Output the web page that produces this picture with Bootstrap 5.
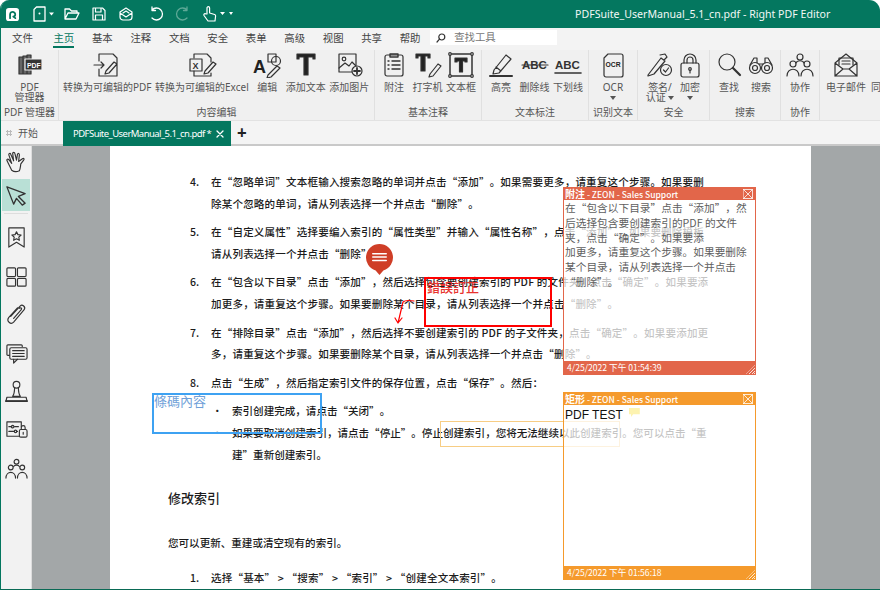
<!DOCTYPE html>
<html lang="zh"><head><meta charset="utf-8"><title>Right PDF Editor</title>
<link href="https://cdn.jsdelivr.net/npm/bootstrap@5.3.0/dist/css/bootstrap.min.css" rel="stylesheet">
<style>
html,body{margin:0;height:590px;overflow:hidden;background:#fff}
body{font-family:"Noto Sans","Noto Sans CJK SC",sans-serif;color:#333}
svg{display:block;fill:none;stroke:#333;stroke-width:1.2;stroke-linecap:round;stroke-linejoin:round}
.appwin{width:880px;height:590px;border-left:1px solid #04775f;border-bottom:1px solid #0a6a55;border-radius:9px 11px 0 0;overflow:hidden;background:#f0f0f0}
.titlebar{height:28px;background:#04775f;color:#fff;padding-left:5px;gap:9px}
.titlebar svg{stroke:#fff}
.logoicon{margin-right:4px}
.extra3{margin-left:3px}
.titlebar svg.dimicon{stroke:#5da896}
.apptitle{position:absolute;left:574px;top:7px;font-size:10.6px;line-height:15px;color:#f2f8f6;white-space:nowrap}
.menubar{height:22px;background:#f3f3f3;font-size:10.4px;padding-left:11px;gap:17.7px;line-height:20px;color:#444}
.menubar>span{display:block;height:20px;white-space:nowrap}
.menubar .cur{color:#04775f;border-bottom:2px solid #04775f;margin-left:3px}
.findbox{width:127px;height:15px;background:#fff;line-height:15px;margin-left:-8px;margin-top:2px;color:#777;padding-left:6px;gap:8px}
.ribbon{height:71px;background:#f0f0f0;border-bottom:1px solid #e2e2e2;overflow:hidden}
.rgroup{height:70px;border-right:1px solid #e0e0e0;flex:none;padding-top:2px}
.rtools{height:52px}
.rlabel{height:16px;text-align:center;font-size:10px;line-height:16px;color:#555;white-space:nowrap;overflow:hidden}
.tool{display:flex;flex-direction:column;align-items:center;font-size:10px;line-height:10px;color:#555;white-space:nowrap;text-align:center;flex:none}
.tool svg{height:26px;width:30px;margin-bottom:4px}
.caret{width:0;height:0;border:3.5px solid transparent;border-top:4px solid #555;border-bottom:0;display:inline-block;vertical-align:1px}
.caretline{margin-top:2px;line-height:6px}
.g1{width:58px}.g2{width:316px}.g3{width:107px}.g4{width:107px}.g5{width:49px}.g6{width:72px}.g7{width:71px}.g8{width:39px}.g9{width:70px}
.g1 .rtools,.g5 .rtools,.g8 .rtools{justify-content:center}
.g2 .rtools{padding-left:4px;gap:3.5px}
.g3 .rtools,.g4 .rtools{padding-left:4px;gap:3.5px}
.g6 .rtools{padding-left:7px}
.g7 .rtools{padding-left:4px;gap:2px}
.g9 .rtools{padding-left:6px}
.tabstrip{height:25px;background:#f4f4f4;border-bottom:2px solid #c9c9c9;font-size:10px;color:#555}
.hometab{width:62px;padding-left:5px;gap:6px;line-height:24px}
.dots{width:6px;height:6px;background:radial-gradient(circle,#bbb 1px,transparent 1.2px) 0 0/3px 3px}
.doctab{width:168px;height:25px;background:#04775f;color:#fff;font-size:9.5px;letter-spacing:-.55px;line-height:24px;padding-left:10px;white-space:nowrap;gap:5px}
.doctab svg{stroke:#fff;stroke-width:1.3;flex:none}
.plustab{font-size:17px;line-height:24px;margin-left:6px;color:#222;font-weight:700}
.workarea{height:443px}
.sidebar{width:31px;flex:none;background:#f2f2f2;align-items:center;border-right:1px solid #ddd}
.sideitem{width:28px;height:33px;display:flex;align-items:center;justify-content:center;flex:none}
.sideitem svg{width:23px;height:23px}
.sideon{background:#b9e0d6;height:32px}
.siderule{width:24px;height:1px;background:#ddd;margin:2px 0}
.pad1{margin-top:5.4px}
.canvasarea{position:relative;flex:1;background:#a3a7a8;overflow:hidden}
.sheet{position:absolute;left:78px;top:0;width:701px;height:460px;background:#fff;padding:25px 0 0 58px;font-family:"Noto Sans CJK SC",sans-serif;font-size:10.55px;line-height:21.75px;color:#1c1c1c;font-weight:500;text-spacing-trim:space-all}
.numrow{display:flex;margin:0 0 6.7px 22px;width:520px}
.numrow>b{font-weight:500;width:21px;flex:none}
.numrow>div{white-space:nowrap;letter-spacing:.17px}
.subrow{display:flex;margin-left:44px}
.subrow>b{font-weight:400;width:20px;flex:none}
.subrow>div{white-space:nowrap}
.dochead{font-size:13px;margin:22px 0 23px;line-height:22px}
.docpara{margin-bottom:13px}
.notepin{position:absolute;left:333px;top:97px}
.rectred{position:absolute;left:392px;top:131px;width:128px;height:50px;border:2px solid #f00}
.txtred{position:absolute;left:395px;top:133px;font:500 13px/16px "Noto Sans CJK TC",serif;color:#e8332e;white-space:nowrap}
.rectblue{position:absolute;left:120px;top:247px;width:170px;height:41px;border:2px solid #3ea2f2;color:#6f9fd8;font:13px/12px "Noto Sans CJK TC",serif}
.rectorg{position:absolute;left:408px;top:275px;width:180px;height:26px;border:1px solid #f7cd84}
.arrowred{position:absolute;left:360px;top:148px}
.popnote{position:absolute;left:531px;width:193px;height:188px;background:rgba(255,255,255,.74);border-style:solid;border-width:1.5px;font-family:"Noto Sans CJK SC",sans-serif;text-spacing-trim:space-all}
.notered{top:41px;border-color:#e2664a}
.noteorg{top:246px;border-color:#f59a2c}
.notehead{height:12px;color:#fff;font-size:8.5px;line-height:12px;white-space:nowrap;padding-left:1px;font-weight:500}
.notehead em{font-style:normal;font-weight:700;font-size:10px}
.notered .notehead,.notered .notefoot{background:#e2664a}
.noteorg .notehead,.noteorg .notefoot{background:#f59a2c}
.noteclose{position:absolute;right:2px;top:1px;width:10px;height:10px;stroke:#fff;stroke-width:.8}
.notebody{height:161px;padding:1px 0 0 1px;font-size:10.7px;line-height:14.8px;color:#606060;font-weight:400;white-space:nowrap}
.notebody .ink{color:#111;font-family:"Liberation Sans",sans-serif;font-size:12px;line-height:18px}
.chip{display:inline-block;width:11px;height:9px;background:#fdf3b0;margin-left:6px;vertical-align:2px;clip-path:polygon(0 0,100% 0,100% 70%,40% 70%,20% 100%,20% 70%,0 70%)}
.notefoot{height:13px;color:#fff;font-size:8.6px;line-height:13px;padding-left:3px;position:relative;white-space:nowrap}
.grip{position:absolute;right:0;bottom:0;width:9px;height:9px;background:repeating-linear-gradient(135deg,rgba(255,255,255,.8) 0 1px,transparent 1px 2px);clip-path:polygon(100% 0,100% 100%,0 100%)}
</style></head>
<body>
<div class="appwin d-flex flex-column">
  <div class="titlebar d-flex align-items-center position-relative">
    <svg class="logoicon" width="13" height="13" viewBox="0 0 16 16"><rect x="0" y="0" width="16" height="16" rx="3.500" fill="#fff" stroke="none"/><path d="M5 12.500V8a3.200 3.200 0 1 1 5.500 2.200M9 10.500l2.500 2" stroke="#04775f" stroke-width="2.200"/></svg>
    <svg width="22" height="16" viewBox="0 0 22 16"><path d="M2 3.500 4.500 1H13v14H2z" stroke-width="1.300"/><path d="M7.500 7.500v.1" stroke-width="2"/><path d="M17 6.500h5l-2.500 3z" fill="#fff" stroke="none"/></svg>
    <svg width="18" height="16" viewBox="0 0 18 16"><path d="M2 13V3h4.500l2 2H14v2M2 13h11l3-6H5z" stroke-width="1.300"/></svg>
    <svg width="18" height="16" viewBox="0 0 16 16"><path d="M2 2h9.500L14 4.500V14H2zM4.500 2v4H10V2M4.500 14V9h7v5" stroke-width="1.200"/></svg>
    <svg width="18" height="16" viewBox="0 0 18 16"><path d="M3 6 9 2l6 4v5a3 3 0 0 1-3 3H6a3 3 0 0 1-3-3zM3 7l6 4 6-4M6 7l3-2 3 2" stroke-width="1.200"/></svg>
    <svg class="extra3" width="18" height="16" viewBox="0 0 18 16"><path d="M5 4a6 6 0 1 1 0 8M5 1v3.500h3.500" stroke-width="1.300"/></svg>
    <svg class="dimicon" width="18" height="16" viewBox="0 0 18 16"><path d="M13 4a6 6 0 1 0 0 8M13 1v3.500H9.500" stroke-width="1.300"/></svg>
    <svg width="34" height="18" viewBox="0 0 34 18"><path d="M6 9V3a1.300 1.300 0 0 1 2.600 0v5l5 1.500a1.500 1.500 0 0 1 1 1.500l-.6 5H7L3 10.500c-.6-1.500 1-2.500 2-1.500z" stroke-width="1.200"/><path d="M19 7h5l-2.500 3zM28 5h4M28 7h4l-2 3z" fill="#fff" stroke="none"/></svg>
    <div class="apptitle">PDFSuite_UserManual_5.1_cn.pdf - Right PDF Editor</div>
  </div>

  <div class="menubar d-flex">
    <span>文件</span><span class="cur">主页</span><span>基本</span><span>注释</span><span>文档</span><span>安全</span><span>表单</span><span>高级</span><span>视图</span><span>共享</span><span>帮助</span>
    <div class="findbox d-flex align-items-center"><svg width="10" height="10" viewBox="0 0 10 10"><circle cx="5.800" cy="4" r="3"/><path d="M3.500 6.200 1 9"/></svg><span>查找工具</span></div>
  </div>

  <div class="ribbon d-flex">
    <div class="rgroup g1">
      <div class="rtools d-flex"><div class="tool"><svg viewBox="0 0 30 26"><path d="M4 5h4v17H4zM8 4h4v18H8zM12 3h4v19h-4z" fill="#666"/><rect x="10" y="7" width="17" height="11" fill="#333" stroke="#f0f0f0"/><text x="12" y="15.500" font-size="6.800" font-weight="700" fill="#fff" stroke="none" font-family="Liberation Sans">PDF</text></svg>PDF<br>管理器</div></div>
      <div class="rlabel">PDF 管理器</div>
    </div>
    <div class="rgroup g2">
      <div class="rtools d-flex">
        <div class="tool"><svg viewBox="0 0 30 26"><path d="M7 9V2h14l4 4v18H7v-7M2 13h10M9 10l3 3-3 3M14 19l8-9 3 2-8 9-4 1z"/></svg>转换为可编辑的PDF</div>
        <div class="tool"><svg viewBox="0 0 30 26"><path d="M7 6V2h13l4 4v4M7 19v5h17v-3"/><rect x="3" y="7" width="12" height="12"/><text x="5.500" y="16.500" font-size="9" font-weight="700" fill="#333" stroke="none" font-family="Liberation Sans">X</text><path d="M18 19l8-9 3 2-8 9-4 1z"/></svg>转换为可编辑的Excel</div>
        <div class="tool"><svg viewBox="0 0 30 26"><text x="1" y="21" font-size="18" font-weight="700" fill="#222" stroke="none" font-family="Liberation Sans">A</text><rect x="16" y="2" width="8" height="8"/><circle cx="24" cy="9" r="4.500"/><path d="M16 23l9-9 3 2-9 9-4 1z"/></svg>编辑</div>
        <div class="tool"><svg viewBox="0 0 30 26"><path d="M6 2h18v5h-2V5h-5v18h-4V5H8v2H6z" fill="#222"/></svg>添加文本</div>
        <div class="tool"><svg viewBox="0 0 30 26"><path d="M18 20H5V2h17v11"/><circle cx="10" cy="7" r="1.800"/><path d="M5 16l6-5 4 3 3-4 4 4"/><circle cx="23" cy="19" r="5"/><path d="M23 16v6M20 19h6" stroke-width="1.800"/></svg>添加图片</div>
      </div>
      <div class="rlabel">内容编辑</div>
    </div>
    <div class="rgroup g3">
      <div class="rtools d-flex">
        <div class="tool"><svg viewBox="0 0 30 26"><rect x="6" y="3" width="18" height="21" rx="2"/><path d="M11 2h8v3h-8zM13 9h8M13 13h8M13 17h8M9 9h1M9 13h1M9 17h1" stroke-width="1.400"/></svg>附注</div>
        <div class="tool"><svg viewBox="0 0 30 26"><path d="M3 2h14v4h-2V4h-3v15H8V4H5v2H3z" fill="#222"/><path d="M17 22l8-10 3 2-8 10-4 1z"/></svg>打字机</div>
        <div class="tool"><svg viewBox="0 0 30 26"><rect x="4" y="2" width="22" height="22" stroke-width="1.500"/><path d="M9 6h12v4h-2V9h-2.500v11h-3V9H11v1H9z" fill="#222"/><circle cx="4" cy="2" r="1.300" fill="#f0f0f0"/><circle cx="26" cy="2" r="1.300" fill="#f0f0f0"/><circle cx="4" cy="24" r="1.300" fill="#f0f0f0"/><circle cx="26" cy="24" r="1.300" fill="#f0f0f0"/></svg>文本框</div>
      </div>
      <div class="rlabel">基本注释</div>
    </div>
    <div class="rgroup g4">
      <div class="rtools d-flex">
        <div class="tool"><svg viewBox="0 0 30 26"><path d="M8 18 20 3l5 4-12 14-6 1zM10 15l5 4"/><path d="M4 24h22" stroke-width="2"/></svg>高亮</div>
        <div class="tool"><svg viewBox="0 0 30 26"><text x="2" y="17" font-size="11.500" font-weight="700" fill="#333" stroke="none" font-family="Liberation Sans">ABC</text><path d="M2 13h26"/></svg>删除线</div>
        <div class="tool"><svg viewBox="0 0 30 26"><text x="2" y="17" font-size="11.500" font-weight="700" fill="#333" stroke="none" font-family="Liberation Sans">ABC</text><path d="M2 21h26" stroke-width="1.600"/></svg>下划线</div>
      </div>
      <div class="rlabel">文本标注</div>
    </div>
    <div class="rgroup g5">
      <div class="rtools d-flex"><div class="tool"><svg viewBox="0 0 30 26"><path d="M6 6l4-4h13a2 2 0 0 1 2 2v19a2 2 0 0 1-2 2H8a2 2 0 0 1-2-2z"/><text x="7.500" y="15" font-size="6.800" font-weight="700" fill="#222" stroke="none" font-family="Liberation Sans">OCR</text></svg>OCR<span class="caretline"><span class="caret"></span></span></div></div>
      <div class="rlabel">识别文本</div>
    </div>
    <div class="rgroup g6">
      <div class="rtools d-flex">
        <div class="tool"><svg viewBox="0 0 30 26"><path d="M3 23 16 6l4 3-11 13-6 2zM15 3l5-1 2 3-3 3"/><circle cx="21" cy="18" r="5.500"/><path d="M18.500 18l2 2 3-4"/></svg>签名/<span>认证 <span class="caret"></span></span></div>
        <div class="tool"><svg viewBox="0 0 30 26"><rect x="6" y="11" width="18" height="14" rx="2"/><path d="M9 11V8a6 6 0 0 1 12 0v3M12 11V8a3 3 0 0 1 6 0v3"/><circle cx="15" cy="17" r="1.300"/><path d="M15 18v3"/></svg>加密<span class="caretline"><span class="caret"></span></span></div>
      </div>
      <div class="rlabel">安全</div>
    </div>
    <div class="rgroup g7">
      <div class="rtools d-flex">
        <div class="tool"><svg viewBox="0 0 30 26"><circle cx="13" cy="10" r="8"/><path d="M19 16l7 7" stroke-width="2.200"/></svg>查找</div>
        <div class="tool"><svg viewBox="0 0 30 26"><circle cx="9" cy="16" r="5.500"/><circle cx="21" cy="16" r="5.500"/><circle cx="9" cy="16" r="2.500"/><circle cx="21" cy="16" r="2.500"/><path d="M4 13 8 6h3v5M26 13l-4-7h-3v5M13 12h4"/></svg>搜索</div>
      </div>
      <div class="rlabel">搜索</div>
    </div>
    <div class="rgroup g8">
      <div class="rtools d-flex"><div class="tool"><svg viewBox="0 0 30 26"><circle cx="15" cy="5" r="3"/><circle cx="8" cy="12" r="3"/><circle cx="22" cy="12" r="3"/><path d="M2 24c0-9 12-9 12 0M16 24c0-9 12-9 12 0M11 11c1-3 7-3 8 0"/></svg>协作</div></div>
      <div class="rlabel">协作</div>
    </div>
    <div class="rgroup g9 border-0">
      <div class="rtools d-flex"><div class="tool"><svg viewBox="0 0 30 26"><path d="M4 11 15 2l11 9v13H4zM4 24l8-7h6l8 7M4 11l8 6M26 11l-8 6"/><path d="M8 13V6h14v7M11 9h8M11 12h8"/></svg>电子邮件</div><div class="tool"><svg viewBox="0 0 30 26"></svg>同步</div></div>
    </div>
  </div>

  <div class="tabstrip d-flex">
    <div class="hometab d-flex align-items-center"><span class="dots"></span><span>开始</span></div>
    <div class="doctab d-flex align-items-center"><span>PDFSuite_UserManual_5.1_cn.pdf *</span><svg width="8" height="8" viewBox="0 0 8 8"><path d="M1 1l6 6M7 1 1 7"/></svg></div>
    <div class="plustab">+</div>
  </div>

  <div class="workarea d-flex">
    <div class="sidebar d-flex flex-column">
      <div class="sideitem"><svg viewBox="0 0 24 24"><path d="M7 20 2 10c-.5-1.500 1-2 2-1l3 4L4 4c-.4-1.500 1.500-2 2-.7l3 7L8 2.500c0-1.500 2-1.500 2.300 0l1.700 7L13 3.500c.3-1.500 2.200-1.200 2 .5l-.8 7 4-3c1.300-.8 2.300.5 1.300 1.500l-3 4c-.5 3-.5 5-1.500 7-3 1.500-6 1-8-.5z"/></svg></div>
      <div class="sideitem sideon"><svg viewBox="0 0 24 24"><path d="M2 3l19 7-7 3 7 7-3 2-6-7-3 6z" stroke-width="1.400"/></svg></div>
      <div class="siderule"></div>
      <div class="sideitem pad1"><svg viewBox="0 0 24 24"><path d="M4 2h16v20l-8-5-8 5z"/><path d="M12 6l1.500 3 3.300.4-2.400 2.200.6 3.300-3-1.600-3 1.600.6-3.300-2.400-2.200 3.300-.4z"/></svg></div>
      <div class="sideitem pad1"><svg viewBox="0 0 24 24"><rect x="2" y="3" width="9" height="9" rx="1"/><rect x="13" y="3" width="9" height="9" rx="1"/><rect x="2" y="14" width="9" height="8" rx="1"/><rect x="13" y="14" width="9" height="8" rx="1"/></svg></div>
      <div class="sideitem pad1"><svg viewBox="0 0 24 24"><path d="M6 14 16 3c2-2 6 1 4 4L9 20c-3 3-8-1-5-5l9-10M9 16l8-9c1-1.500-.5-2.500-2-1.500"/></svg></div>
      <div class="sideitem pad1"><svg viewBox="0 0 24 24"><path d="M5 14H3a1 1 0 0 1-1-1V4a1 1 0 0 1 1-1h14a1 1 0 0 1 1 1v1"/><rect x="5" y="6" width="18" height="12" rx="1.500" fill="#f2f2f2"/><path d="M8 9h12M8 12h12M8 15h12M9 18v4l4-4"/></svg></div>
      <div class="sideitem pad1"><svg viewBox="0 0 24 24"><circle cx="12" cy="5" r="3.500"/><path d="M10 8c0 4 0 6-2 9h8c-2-3-2-5-2-9M2 18h20l1 4H1z"/><path d="M1 22h22" stroke-width="2"/></svg></div>
      <div class="sideitem pad1"><svg viewBox="0 0 24 24"><path d="M15 19H2V4h15v5"/><path d="M4 9h3M10 9h4M4 14h6M12 14h1"/><circle cx="8" cy="9" r="1.300"/><circle cx="11" cy="14" r="1.300"/><rect x="15" y="12" width="8" height="8" rx="1.500"/><path d="M17 12v-2a2 2 0 0 1 4 0v2M19 15v2"/></svg></div>
      <div class="sideitem pad1"><svg viewBox="0 0 24 24"><circle cx="12" cy="5" r="2.500"/><circle cx="6" cy="11" r="2.500"/><circle cx="18" cy="11" r="2.500"/><path d="M1 22c0-8 10-8 10 0M13 22c0-8 10-8 10 0M9 10c1-2 5-2 6 0"/></svg></div>
    </div>
    <div class="canvasarea">
      <div class="sheet">
        <div class="numrow"><b>4.</b><div>在“忽略单词”文本框输入搜索忽略的单词并点击“添加”。如果需要更多，请重复这个步骤。如果要删<br>除某个忽略的单词，请从列表选择一个并点击“删除”。</div></div>
        <div class="numrow"><b>5.</b><div>在“自定义属性”选择要编入索引的“属性类型”并输入“属性名称”，点击“添加”。如果要删除模板<br>请从列表选择一个并点击“删除”。</div></div>
        <div class="numrow"><b>6.</b><div>在“包含以下目录”点击“添加”，然后选择包含要创建索引的 PDF 的文件夹，点击“确定”。如果要添<br>加更多，请重复这个步骤。如果要删除某个目录，请从列表选择一个并点击“删除”。</div></div>
        <div class="numrow"><b>7.</b><div>在“排除目录”点击“添加”，然后选择不要创建索引的 PDF 的子文件夹，点击“确定”。如果要添加更<br>多，请重复这个步骤。如果要删除某个目录，请从列表选择一个并点击“删除”。</div></div>
        <div class="numrow"><b>8.</b><div>点击“生成”，然后指定索引文件的保存位置，点击“保存”。然后：</div></div>
        <div class="subrow"><b>·</b><div>索引创建完成，请点击“关闭”。</div></div>
        <div class="subrow"><b>·</b><div>如果要取消创建索引，请点击“停止”。停止创建索引，您将无法继续以此创建索引。您可以点击“重<br>建”重新创建索引。</div></div>
        <div class="dochead">修改索引</div>
        <div class="docpara">您可以更新、重建或清空现有的索引。</div>
        <div class="numrow"><b>1.</b><div>选择“基本” &gt; “搜索” &gt; “索引” &gt; “创建全文本索引”。</div></div>
      </div>
      <svg class="notepin" width="29" height="33" viewBox="0 0 30 34"><path d="M15 1a14 14 0 0 1 4 27.400L15 33l-4-4.600A14 14 0 0 1 15 1z" fill="#cf3e27" stroke="none"/><path d="M8 11h14M8 14.500h14M8 18h14" stroke="#fff" stroke-width="1.500"/></svg>
      <div class="rectred"></div>
      <div class="txtred">錯誤訂正</div>
      <svg class="arrowred" width="24" height="34" viewBox="0 0 24 34"><path d="M22 7c-6-1-9-1-11 1L6 29M3 24l3 5 4-5" stroke="#f00" stroke-width="1.200"/></svg>
      <div class="rectblue">條碼內容</div>
      <div class="rectorg"></div>
      <div class="popnote notered">
        <div class="notehead"><em>附注</em> - ZEON - Sales Support</div>
        <svg class="noteclose" viewBox="0 0 10 10"><rect x=".5" y=".5" width="9" height="9"/><path d="M.5.5l9 9M9.500.5l-9 9"/></svg>
        <div class="notebody">在“包含以下目录”点击“添加”，然<br>后选择包含要创建索引的PDF 的文件<br>夹，点击“确定”。如果要添<br>加更多，请重复这个步骤。如果要删除<br>某个目录，请从列表选择一个并点击<br>“删除”。</div>
        <div class="notefoot">4/25/2022 下午 01:54:39<span class="grip"></span></div>
      </div>
      <div class="popnote noteorg">
        <div class="notehead"><em>矩形</em> - ZEON - Sales Support</div>
        <svg class="noteclose" viewBox="0 0 10 10"><rect x=".5" y=".5" width="9" height="9"/><path d="M.5.5l9 9M9.500.5l-9 9"/></svg>
        <div class="notebody"><span class="ink">PDF TEST</span><span class="chip"></span></div>
        <div class="notefoot">4/25/2022 下午 01:56:18<span class="grip"></span></div>
      </div>
    </div>
  </div>
</div>
<script src="https://cdn.jsdelivr.net/npm/bootstrap@5.3.0/dist/js/bootstrap.bundle.min.js"></script>
</body></html>
